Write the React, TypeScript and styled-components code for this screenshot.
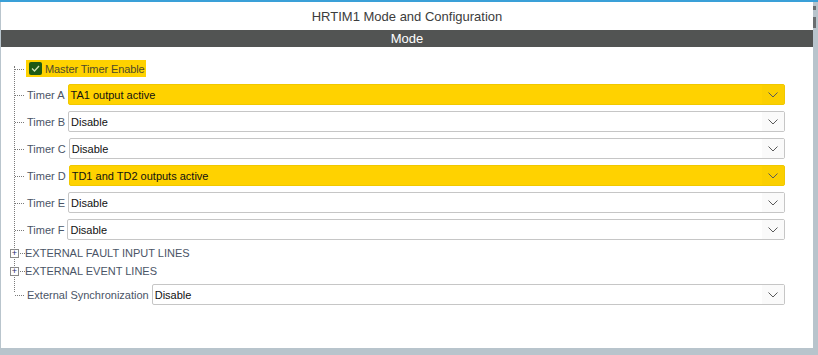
import React from 'react';
import styled, { createGlobalStyle } from 'styled-components';

const GlobalStyle = createGlobalStyle`
  html, body {
    margin: 0;
    padding: 0;
    background: #ffffff;
  }
  body {
    font-family: 'Liberation Sans', Arial, sans-serif;
  }
`;

interface TimerRow {
  label: string;
  value: string;
  active?: boolean;
}

const timers: TimerRow[] = [
  { label: 'Timer A', value: 'TA1 output active', active: true },
  { label: 'Timer B', value: 'Disable' },
  { label: 'Timer C', value: 'Disable' },
  { label: 'Timer D', value: 'TD1 and TD2 outputs active', active: true },
  { label: 'Timer E', value: 'Disable' },
  { label: 'Timer F', value: 'Disable' },
];

const Chevron = (): JSX.Element => (
  <svg width="10" height="6" viewBox="0 0 10 6">
    <path d="M0.5 0.5 L5 5 L9.5 0.5" fill="none" stroke="#5a5a5a" strokeWidth="1" />
  </svg>
);

const Check = (): JSX.Element => (
  <svg width="9" height="7" viewBox="0 0 9 7">
    <path d="M1 3.5 L3.5 6 L8 1" fill="none" stroke="#cfe3b4" strokeWidth="1.3" />
  </svg>
);

const Select = ({ value, active }: { value: string; active?: boolean }): JSX.Element => (
  <SelectBox $active={active}>
    <SelectText>{value}</SelectText>
    <SelectArrow $active={active}>
      <Chevron />
    </SelectArrow>
  </SelectBox>
);

const App = (): JSX.Element => {
  return (
    <>
      <GlobalStyle />
      <Frame>
        <Panel>
          <Title>HRTIM1 Mode and Configuration</Title>
          <ModeBar>Mode</ModeBar>
          <Tree>
            <MasterRow>
              <Highlight>
                <CheckBox>
                  <Check />
                </CheckBox>
                <HighlightText>Master Timer Enable</HighlightText>
              </Highlight>
            </MasterRow>
            {timers.map((t, i) => (
              <SelectRow key={t.label} $gap={i === 0 ? 7 : 6}>
                <Label>{t.label}</Label>
                <Select value={t.value} active={t.active} />
              </SelectRow>
            ))}
            <GroupRow $gap={5}>
              <Expander>+</Expander>
              <GroupText>EXTERNAL FAULT INPUT LINES</GroupText>
            </GroupRow>
            <GroupRow $gap={2}>
              <Expander>+</Expander>
              <GroupText>EXTERNAL EVENT LINES</GroupText>
            </GroupRow>
            <SelectRow $gap={5}>
              <Label>External Synchronization</Label>
              <Select value="Disable" />
            </SelectRow>
          </Tree>
        </Panel>
        <ScrollBar>
          <ScrollMark $h={4} />
          <ScrollMark $h={11} />
        </ScrollBar>
      </Frame>
      <BottomStrip />
    </>
  );
};

export default App;

const Frame = styled.div`
  display: flex;
  width: 818px;
  height: 348px;
  border-top: 2px solid #3aa0d8;
  box-sizing: border-box;
`;

const Panel = styled.div`
  flex: 1;
  display: flex;
  flex-direction: column;
  border-left: 1px solid #b9c5cd;
  background: #ffffff;
`;

const ScrollBar = styled.div`
  width: 5px;
  background: #b8c4cc;
  display: flex;
  flex-direction: column;
  gap: 7px;
  padding-top: 4px;
  box-sizing: border-box;
`;

const ScrollMark = styled.div<{ $h: number }>`
  height: ${(p) => p.$h}px;
  width: 3px;
  background: #6a6e70;
`;

const Title = styled.div`
  height: 28px;
  display: flex;
  align-items: center;
  justify-content: center;
  font-family: 'Liberation Sans Narrow', 'Liberation Sans', sans-serif;
  font-size: 13px;
  color: #3c3c3c;
`;

const ModeBar = styled.div`
  height: 17px;
  background: #525453;
  color: #ffffff;
  display: flex;
  align-items: center;
  justify-content: center;
  font-family: 'Liberation Sans Narrow', 'Liberation Sans', sans-serif;
  font-size: 13px;
`;

const Tree = styled.div`
  position: relative;
  display: flex;
  flex-direction: column;
  padding: 13px 28px 0 9px;
  font-size: 11px;

  &::before {
    content: '';
    position: absolute;
    left: 13px;
    top: 19px;
    height: 226px;
    border-left: 1px dotted #7a7a7a;
  }
`;

const Connector = `
  &::before {
    content: '';
    position: absolute;
    left: 5px;
    top: 50%;
    width: 9px;
    border-top: 1px dotted #7a7a7a;
  }
`;

const MasterRow = styled.div`
  position: relative;
  display: flex;
  align-items: center;
  height: 17px;
  padding-left: 16px;
  ${Connector}
`;

const Highlight = styled.div`
  display: flex;
  align-items: center;
  gap: 3px;
  height: 17px;
  padding: 0 1px 0 3px;
  background: #ffd200;
`;

const CheckBox = styled.div`
  width: 13px;
  height: 13px;
  border-radius: 2px;
  background: #1e5a14;
  display: flex;
  align-items: center;
  justify-content: center;
`;

const HighlightText = styled.span`
  color: #4d4a2c;
  letter-spacing: -0.1px;
`;

const SelectRow = styled.div<{ $gap: number }>`
  position: relative;
  display: flex;
  align-items: center;
  gap: 3px;
  height: 21px;
  margin-top: ${(p) => p.$gap}px;
  padding-left: 17px;
  ${Connector}
`;

const Label = styled.span`
  color: #4a5466;
  white-space: nowrap;
`;

const SelectBox = styled.div<{ $active?: boolean }>`
  flex: 1;
  display: flex;
  align-items: stretch;
  height: 21px;
  box-sizing: border-box;
  border: 1px solid ${(p) => (p.$active ? '#f0c800' : '#c6c6c6')};
  border-radius: 2px;
  background: ${(p) => (p.$active ? '#ffd200' : '#ffffff')};
`;

const SelectText = styled.div`
  flex: 1;
  display: flex;
  align-items: center;
  padding-left: 2px;
  color: #111111;
`;

const SelectArrow = styled.div<{ $active?: boolean }>`
  width: 22px;
  display: flex;
  align-items: center;
  justify-content: center;
  background: ${(p) => (p.$active ? '#fbcf00' : '#fafafa')};
`;

const GroupRow = styled.div<{ $gap: number }>`
  position: relative;
  display: flex;
  align-items: center;
  height: 16px;
  margin-top: ${(p) => p.$gap}px;

  &::after {
    content: '';
    position: absolute;
    left: 10px;
    top: 50%;
    width: 5px;
    border-top: 1px dotted #7a7a7a;
  }
`;

const Expander = styled.div`
  width: 7px;
  height: 7px;
  border: 1px solid #8a8a8a;
  background: #ffffff;
  color: #2a2a6a;
  font-size: 9px;
  line-height: 7px;
  text-align: center;
  position: relative;
  z-index: 1;
`;

const GroupText = styled.span`
  margin-left: 6px;
  color: #4a5466;
`;

const BottomStrip = styled.div`
  width: 818px;
  height: 7px;
  background: #b8c4cc;
`;
